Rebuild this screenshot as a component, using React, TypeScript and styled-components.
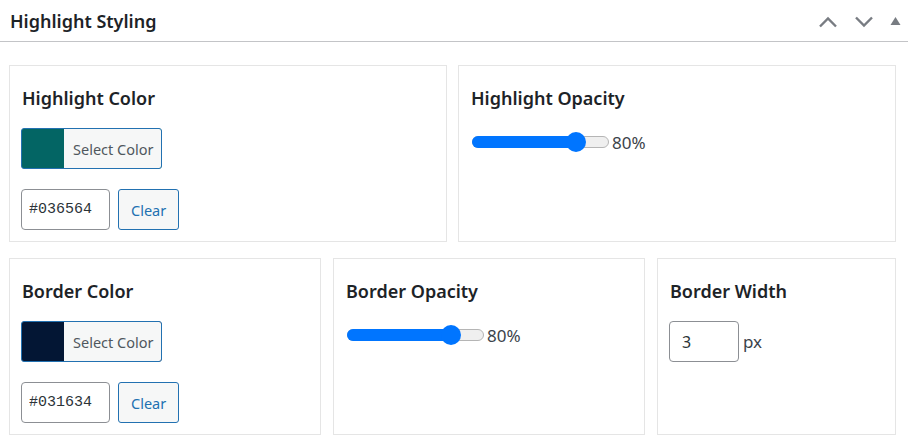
import React from 'react';
import styled, { createGlobalStyle } from 'styled-components';

const GlobalStyle = createGlobalStyle`
  body {
    margin: 0;
    background: #fff;
    font-family: "Noto Sans", "Liberation Sans", sans-serif;
    color: #1d2327;
  }
`;

const Box = styled.div`
  width: 908px;
`;

const Header = styled.div`
  display: flex;
  align-items: center;
  justify-content: space-between;
  height: 41px;
  padding: 0 7px 0 10px;
  border-bottom: 1px solid #c3c4c7;

  h2 {
    margin: 0;
    font-size: 18px;
    font-weight: 600;
    color: #1d2327;
  }
`;

const Handles = styled.div`
  display: flex;
  align-items: center;
  gap: 16px;
  padding-top: 2px;

  svg {
    display: block;
  }
`;

const Inside = styled.div`
  display: flex;
  flex-direction: column;
  gap: 16px;
  padding: 23px 12px 9px 9px;
`;

const Row = styled.div<{ $cols: string; $gap: number }>`
  display: grid;
  grid-template-columns: ${(p) => p.$cols};
  column-gap: ${(p) => p.$gap}px;
`;

const Card = styled.div`
  border: 1px solid #e5e5e5;
  padding: 20px 11px 10px 11px;
  min-height: 177px;
  box-sizing: border-box;
`;

const Title = styled.h3`
  margin: 0 0 18px 1px;
  font-size: 18px;
  line-height: 24px;
  font-weight: 600;
  color: #1d2327;
`;

const ColorButton = styled.button<{ $color: string }>`
  display: flex;
  height: 41px;
  padding: 0 0 0 42px;
  border: 1px solid #2271b1;
  border-radius: 3px;
  background: ${(p) => p.$color};
  font-family: inherit;
  cursor: pointer;
  overflow: hidden;

  span {
    display: flex;
    align-items: center;
    height: 100%;
    padding: 0 8px 0 9px;
    background: #f6f7f7;
    color: #50575e;
    font-size: 14.5px;
  }
`;

const HexRow = styled.div`
  display: flex;
  gap: 8px;
  margin-top: 20px;
`;

const TextInput = styled.input<{ $width: number; $mono?: boolean }>`
  width: ${(p) => p.$width}px;
  height: 41px;
  box-sizing: border-box;
  padding: 0 ${(p) => (p.$mono ? 7 : 12)}px;
  border: 1px solid #8c8f94;
  border-radius: 4px;
  color: #2c3338;
  font-family: ${(p) => (p.$mono ? '"Liberation Mono", monospace' : 'inherit')};
  font-size: ${(p) => (p.$mono ? 15 : 16)}px;
  outline: none;
`;

const ClearButton = styled.button`
  height: 41px;
  padding: 0 12px;
  border: 1px solid #2271b1;
  border-radius: 3px;
  background: #f6f7f7;
  color: #2271b1;
  font-family: inherit;
  font-size: 14.5px;
  cursor: pointer;
`;

const SliderRow = styled.div`
  display: flex;
  align-items: center;
  height: 30px;
  margin-top: -1px;
  padding-left: 2px;
`;

const Track = styled.div`
  position: relative;
  width: 137px;
  height: 12px;
  box-sizing: border-box;
  border: 1px solid #b5b5b5;
  border-radius: 6px;
  background: #efefef;
`;

const Fill = styled.div`
  position: absolute;
  left: -1px;
  top: -1px;
  bottom: -1px;
  border-radius: 6px;
  background: #0075ff;
`;

const Thumb = styled.div`
  position: absolute;
  top: 50%;
  width: 20px;
  height: 20px;
  margin: -10px 0 0 -10px;
  border-radius: 50%;
  background: #0075ff;
`;

const Value = styled.span`
  margin-left: 3px;
  font-size: 17px;
  color: #3c434a;
`;

const UnitRow = styled.div`
  display: flex;
  align-items: center;
  gap: 1px;
`;

const ColorField = ({ title, color }: { title: string; color: string }) => (
  <Card>
    <Title>{title}</Title>
    <ColorButton $color={color} type="button">
      <span>Select Color</span>
    </ColorButton>
    <HexRow>
      <TextInput $width={89} $mono defaultValue={color} />
      <ClearButton type="button">Clear</ClearButton>
    </HexRow>
  </Card>
);

const OpacityField = ({ title, value }: { title: string; value: number }) => {
  // thumb center moves inside the track minus the thumb width, like a native range
  const center = 10 + (value / 100) * (137 - 20) - 1;
  return (
    <Card>
      <Title>{title}</Title>
      <SliderRow>
        <Track>
          <Fill style={{ width: center + 2 }} />
          <Thumb style={{ left: center }} />
        </Track>
        <Value>{value}%</Value>
      </SliderRow>
    </Card>
  );
};

const App: React.FC = () => (
  <Box>
    <GlobalStyle />
    <Header>
      <h2>Highlight Styling</h2>
      <Handles>
        <svg width="20" height="12" viewBox="0 0 20 12">
          <path d="M2 10.5 L10 2.5 L18 10.5" fill="none" stroke="#787c82" strokeWidth="2.4" />
        </svg>
        <svg width="20" height="12" viewBox="0 0 20 12">
          <path d="M2 1.5 L10 9.5 L18 1.5" fill="none" stroke="#787c82" strokeWidth="2.4" />
        </svg>
        <svg width="11" height="12" viewBox="0 0 11 12">
          <path d="M5.5 1 L10.5 9 L0.5 9 Z" fill="#787c82" />
        </svg>
      </Handles>
    </Header>
    <Inside>
      <Row $cols="1fr 1fr" $gap={11}>
        <ColorField title="Highlight Color" color="#036564" />
        <OpacityField title="Highlight Opacity" value={80} />
      </Row>
      <Row $cols="312px 312px 1fr" $gap={12}>
        <ColorField title="Border Color" color="#031634" />
        <OpacityField title="Border Opacity" value={80} />
        <Card>
          <Title>Border Width</Title>
          <UnitRow>
            <TextInput $width={70} defaultValue="3" />
            <Value>px</Value>
          </UnitRow>
        </Card>
      </Row>
    </Inside>
  </Box>
);

export default App;
